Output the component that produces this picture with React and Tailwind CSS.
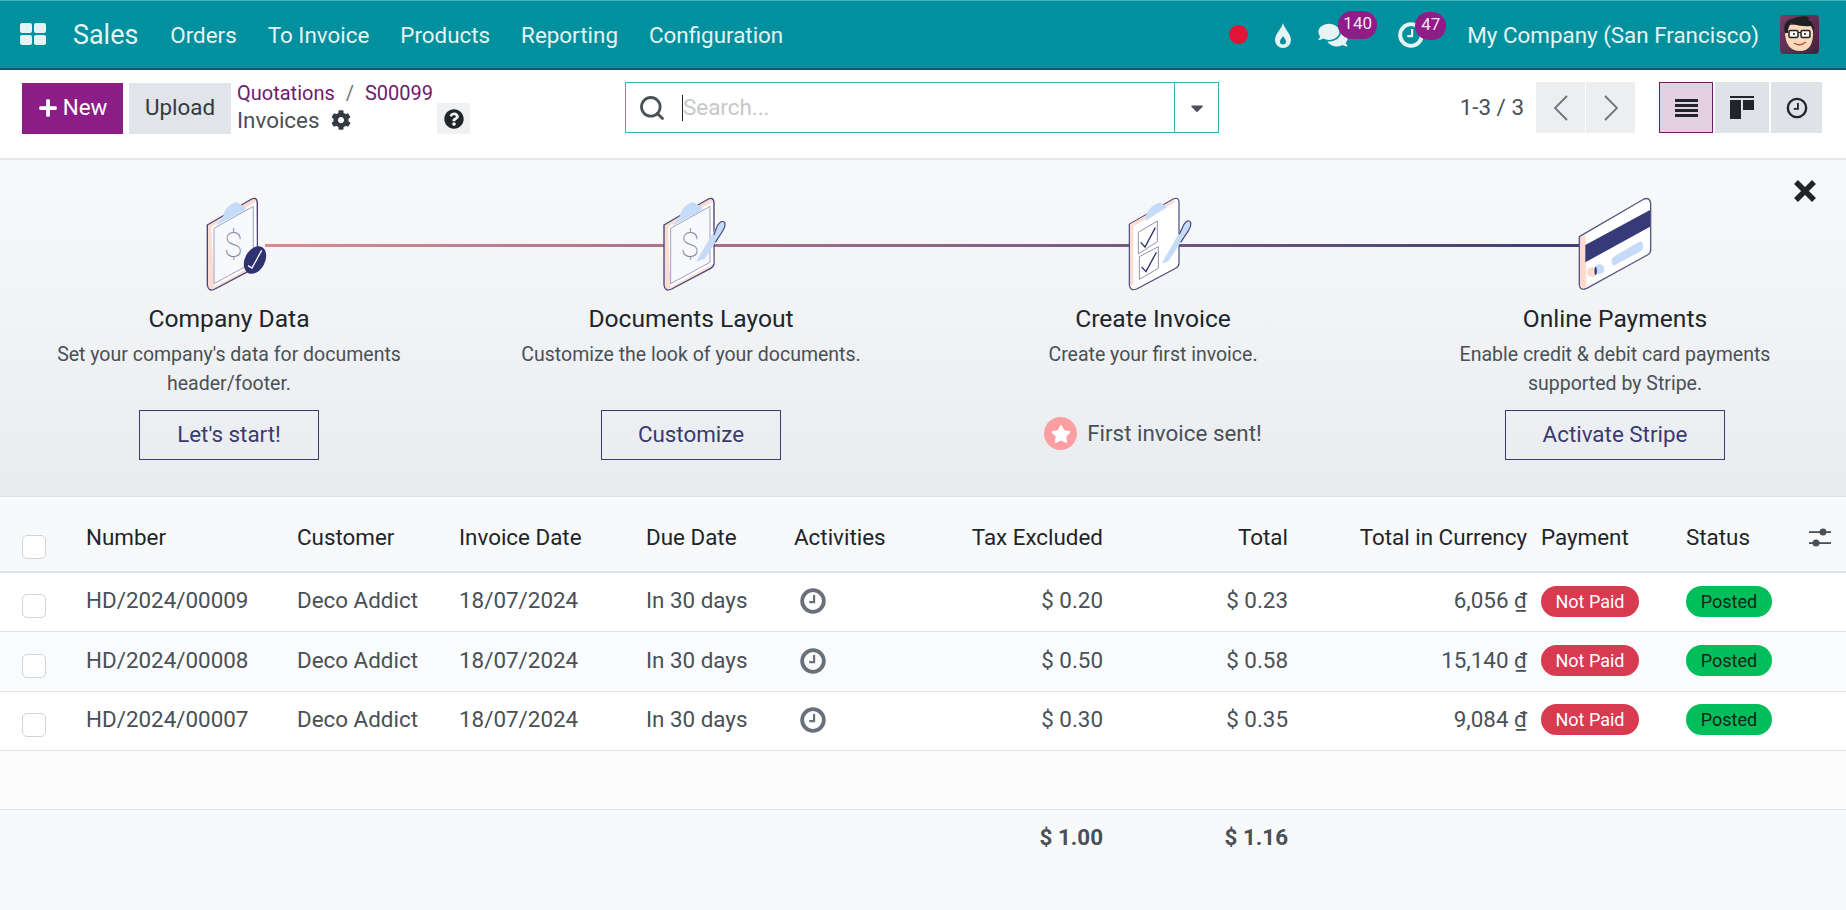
import React from "react";
import { FaComments, FaCog, FaQuestionCircle, FaPlus, FaCaretDown, FaStar } from "react-icons/fa";
import { Search } from "lucide-react";

const Clock = ({ className, sw = 3 }) => (
  <svg viewBox="0 0 24 24" className={className} fill="none" stroke="currentColor">
    <circle cx="12" cy="12" r="10" strokeWidth={sw} />
    <path d="M13 6.5v6.5H8.5" strokeWidth="2" />
  </svg>
);

const NAVY = "#46467c";

const Board = ({ dx = 0 }) => (
  <g transform={`translate(${dx} 0)`}>
    <path d="M72 120 L205 42 Q220 35 222 52 L222 235 Q222 245 212 250 L95 312 Q75 322 72 300 Z" fill="#fbdcd2" stroke={NAVY} strokeWidth="4" />
    <path d="M84 126 L218 50 L220 236 L92 306 Z" fill="#ffffff" />
    <path d="M92 130 L210 64 L210 232 L92 296 Z" fill="#f8f9fd" stroke="#8b8db0" strokeWidth="2.5" />
    <path d="M98 122 L120 92 Q122 72 145 56 Q160 46 170 58 L186 66 L186 76 Z" fill="#c5dbf7" />
    <text x="150" y="216" fontSize="104" fontWeight="100" fill="#85879f" textAnchor="middle" fontFamily="Roboto, sans-serif">$</text>
  </g>
);

const Pen = ({ dx = 0, dy = 0 }) => (
  <g transform={`translate(${dx} ${dy})`}>
    <path d="M168 230 L232 122 Q244 104 254 112 Q258 122 248 138 L194 222 Z" fill="#c5dbf7" />
    <path d="M222 150 L232 122 Q244 104 254 112 Q258 122 248 138 L226 172" fill="none" stroke={NAVY} strokeWidth="3.5" />
  </g>
);

const Icon1 = () => (
  <svg viewBox="-33 0 360 345" className="w-[120px] h-[115px]">
    <Board dx={10} />
    <ellipse cx="225" cy="225" rx="30" ry="44" transform="rotate(28 225 225)" fill="#2f3270" />
    <path d="M204 242 L216 249 L245 196" fill="none" stroke="#fff" strokeWidth="4" />
  </svg>
);
const Icon2 = () => (
  <svg viewBox="-27 0 360 345" className="w-[120px] h-[115px]">
    <Board />
    <Pen />
  </svg>
);
const Icon3 = () => (
  <svg viewBox="-51 0 360 345" className="w-[120px] h-[115px]">
    <path d="M58 118 L190 42 Q205 35 207 50 L207 235 Q207 245 197 250 L80 312 Q60 320 58 300 Z" fill="#ffffff" stroke={NAVY} strokeWidth="3.5" />
    <path d="M60 118 L190 44 L196 50 L70 124 L70 300 L60 302 Z" fill="#fbdcd2" />
    <path d="M106 108 L110 84 Q125 60 150 52 L172 66 Z" fill="#c5dbf7" />
    <path d="M85 142 L142 108 L142 170 L85 207 Z M88 215 L145 185 L145 250 L88 283 Z" fill="none" stroke="#7c7c9c" strokeWidth="2.5" />
    <path d="M92 172 L105 186 L136 128 M95 246 L108 260 L139 202" fill="none" stroke="#2f3270" strokeWidth="4" />
    <path d="M155 236 L222 118 Q234 100 242 112 Q244 122 236 136 L176 228 Z" fill="#c5dbf7" />
    <path d="M208 148 L222 118 Q234 100 242 112 Q244 122 236 136 L212 172" fill="none" stroke={NAVY} strokeWidth="3.5" />
  </svg>
);
const Icon4 = () => (
  <svg viewBox="-45 0 360 345" className="w-[120px] h-[115px]">
    <path d="M28 155 L222 42 Q240 36 242 55 L242 195 Q242 205 232 210 L50 310 Q30 318 28 300 Z" fill="#ffffff" stroke="#55557f" strokeWidth="4" />
    <path d="M30 156 L46 150 L50 306 Q32 314 30 298 Z" fill="#fcdacd" />
    <path d="M46 180 L240 75 L240 125 L46 232 Z" fill="#363a78" />
    <path d="M135 213 L205 172 Q218 166 219 180 L219 188 Q219 195 210 200 L135 240 Q125 244 125 232 L125 226 Q125 218 135 213 Z" fill="#c5dbf7" />
    <circle cx="66" cy="262" r="15" fill="#fcdacd" />
    <circle cx="88" cy="253" r="15" fill="#c5dbf7" />
    <ellipse cx="77" cy="258" rx="3.5" ry="12" fill="#2f3270" />
  </svg>
);

const Avatar = () => (
  <svg viewBox="0 0 39 39" className="w-[39px] h-[39px] rounded-[4px]">
    <defs>
      <linearGradient id="av" x1="0" y1="0" x2="1" y2="1">
        <stop offset="0" stopColor="#7b3d66" />
        <stop offset="1" stopColor="#43213f" />
      </linearGradient>
    </defs>
    <rect width="39" height="39" fill="url(#av)" />
    <path d="M5 16 Q5 36 20 36 Q34 36 33 15 L31 9 L9 10 Z" fill="#fbd7bb" />
    <path d="M5 18 Q2 6 12 4 Q20 0 29 2 L28 5 Q35 7 34 18 L31 11 Q20 12 11 8 Q8 12 8 18 Z" fill="#1e2024" />
    <rect x="9" y="15.5" width="9" height="7" rx="1.5" fill="#fdf6ee" stroke="#23242a" strokeWidth="1.5" />
    <rect x="21" y="15.5" width="9" height="7" rx="1.5" fill="#fdf6ee" stroke="#23242a" strokeWidth="1.5" />
    <path d="M18 17.5h3" stroke="#23242a" strokeWidth="1.2" />
    <circle cx="14" cy="19" r="1" fill="#222" />
    <circle cx="25" cy="19" r="1" fill="#222" />
    <path d="M14 28 Q20 32 26 27" fill="none" stroke="#a5543f" strokeWidth="1.3" />
  </svg>
);

const Checkbox = ({ className }) => (
  <span className={"block w-6 h-6 rounded-[5px] border border-[#ced4da] bg-white " + className} />
);

const GRID = "grid grid-cols-[86px_211px_162px_187px_148px_130px_179px_185px_239px_14px_145px_1fr] items-center";

const steps = [
  { icon: <Icon1 />, title: "Company Data", desc: "Set your company's data for documents header/footer.", btn: "Let's start!", w: "w-[180px]" },
  { icon: <Icon2 />, title: "Documents Layout", desc: "Customize the look of your documents.", btn: "Customize", w: "w-[180px]" },
  { icon: <Icon3 />, title: "Create Invoice", desc: "Create your first invoice.", done: "First invoice sent!" },
  { icon: <Icon4 />, title: "Online Payments", desc: "Enable credit & debit card payments supported by Stripe.", btn: "Activate Stripe", w: "w-[220px]" },
];

const rows = [
  { n: "HD/2024/00009", tax: "$ 0.20", total: "$ 0.23", cur: "6,056 ₫", bg: "bg-white" },
  { n: "HD/2024/00008", tax: "$ 0.50", total: "$ 0.58", cur: "15,140 ₫", bg: "bg-[#fafbfc]" },
  { n: "HD/2024/00007", tax: "$ 0.30", total: "$ 0.35", cur: "9,084 ₫", bg: "bg-white" },
];

export default function App() {
  return (
    <div className="w-[1846px] h-[910px] overflow-hidden bg-white [font-family:Roboto,sans-serif] text-[22.4px] text-[#495057]">
      {/* Navbar */}
      <header className="h-[70px] bg-[#00909e] border-t border-t-[#45b3bd] border-b-2 border-b-[#00626c] flex items-center text-[#e6f4f5]">
        <svg viewBox="0 0 26 22" className="ml-[20px] w-[26px] h-[22px] mb-[2px]" fill="#e4f3f4">
          <rect x="0" y="0" width="12" height="10" rx="2" />
          <rect x="14" y="0" width="12" height="10" rx="2" />
          <rect x="0" y="12" width="12" height="10" rx="2" />
          <rect x="14" y="12" width="12" height="10" rx="2" />
        </svg>
        <span className="ml-[27px] mt-[2px] text-[26.9px]">Sales</span>
        <nav className="ml-[32px] mt-[2px] flex gap-[31px]">
          <span>Orders</span>
          <span>To Invoice</span>
          <span>Products</span>
          <span>Reporting</span>
          <span>Configuration</span>
        </nav>
        <div className="ml-auto flex items-center">
          <span className="w-[19px] h-[19px] rounded-full bg-[#e01538]" />
          <svg viewBox="0 0 20 26" className="ml-[25px] w-[20px] h-[26px]">
            <path d="M10 1 C11 6 18 12 18 18 A8 8 0 0 1 2 18 C2 12 9 6 10 1 Z" fill="#e6f4f5" />
            <path d="M10 14 C11 16 13 17.500 13 19.500 A3 3 0 0 1 7 19.500 C7 17.500 9 16 10 14 Z" fill="#00909e" />
          </svg>
          <span className="relative ml-[25px] w-[30px] h-[26px]">
            <FaComments className="w-[30px] h-[26px]" />
            <span className="absolute left-[20px] top-[-11px] w-[39px] h-[28px] rounded-[14px] bg-[#8f1c87] text-[17px] leading-[24px] text-center text-[#f3e4f2]">140</span>
          </span>
          <span className="relative ml-[50px] w-[26px] h-[26px]">
            <Clock className="w-[26px] h-[26px]" sw={3.6} />
            <span className="absolute left-[17px] top-[-10px] w-[31px] h-[28px] rounded-[14px] bg-[#8f1c87] text-[17px] leading-[24px] text-center text-[#f3e4f2]">47</span>
          </span>
          <span className="ml-[43px] mt-[2px]">My Company (San Francisco)</span>
          <span className="ml-[21px] mr-[27px]"><Avatar /></span>
        </div>
      </header>

      {/* Control panel */}
      <section className="h-[90px] border-b-2 border-b-[#e4e6ea] flex items-start bg-white">
        <div className="w-[625px] shrink-0 flex items-start pt-[13px] pl-[22px]">
          <button className="w-[101px] h-[51px] pb-[2px] bg-[#8c1c86] text-white flex items-center justify-center gap-[5px]">
            <FaPlus className="w-[20px] h-[20px]" />New
          </button>
          <button className="ml-[6px] w-[102px] h-[51px] pb-[2px] bg-[#e1e4e8] text-[#343a40]">Upload</button>
          <div className="ml-[6px] mt-[-4px] w-[200px] leading-[28px] whitespace-nowrap">
            <div className="text-[#71196d] text-[20px]">
              Quotations <span className="text-[#6c757d] mx-[6px]">/</span> S00099
            </div>
            <div className="flex items-center mt-[-1px]">
              Invoices <FaCog className="ml-[11px] w-[20px] h-[20px] text-[#343a40]" />
            </div>
          </div>
          <button className="w-[33px] h-[31px] mt-[20px] bg-[#eff1f3] flex items-center justify-center">
            <FaQuestionCircle className="w-[20px] h-[20px] text-[#212529]" />
          </button>
        </div>
        <div className="mt-[12px] w-[594px] h-[51px] border border-[#3ab0bc] flex items-center">
          <Search className="ml-[12px] w-[28px] h-[28px] text-[#495057]" strokeWidth={2.4} />
          <span className="ml-[16px] w-px h-[26px] bg-[#212529]" />
          <span className="text-[#c5c8cc]">Search...</span>
          <span className="ml-auto w-[44px] h-full border-l border-[#3ab0bc] flex items-center justify-center">
            <FaCaretDown className="w-[20px] h-[20px] text-[#495057]" />
          </span>
        </div>
        <div className="flex-1 flex items-start justify-end mt-[12px] pr-[24px]">
          <span className="h-[51px] leading-[51px]">1-3 / 3</span>
          <div className="ml-[12px] flex gap-px">
            <span className="w-[49px] h-[51px] bg-[#eceef0] flex items-center justify-center">
              <svg viewBox="0 0 14 26" className="w-[14px] h-[26px]" fill="none" stroke="#6c757d" strokeWidth="1.8"><path d="M13 1 1 13l12 12" /></svg>
            </span>
            <span className="w-[49px] h-[51px] bg-[#eceef0] flex items-center justify-center">
              <svg viewBox="0 0 14 26" className="w-[14px] h-[26px]" fill="none" stroke="#6c757d" strokeWidth="1.8"><path d="M1 1l12 12L1 25" /></svg>
            </span>
          </div>
          <div className="ml-[24px] flex gap-[2px]">
            <span className="w-[54px] h-[51px] bg-[#e3d0e3] border border-[#71196d] flex items-center justify-center">
              <svg viewBox="0 0 23 18" className="w-[23px] h-[18px]" fill="#212529">
                <rect y="0" width="23" height="3" /><rect y="5" width="23" height="3" /><rect y="10" width="23" height="3" /><rect y="15" width="23" height="3" />
              </svg>
            </span>
            <span className="w-[54px] h-[51px] bg-[#dfe2e6] flex items-center justify-center">
              <svg viewBox="0 0 24 23" className="w-[24px] h-[23px]" fill="#212529">
                <rect y="0" width="24" height="2" /><rect y="4" width="11" height="19" /><rect x="13" y="4" width="11" height="10" />
              </svg>
            </span>
            <span className="w-[51px] h-[51px] bg-[#dfe2e6] flex items-center justify-center">
              <Clock className="w-[22px] h-[22px] text-[#212529]" sw={2.6} />
            </span>
          </div>
        </div>
      </section>

      {/* Onboarding banner */}
      <section className="relative h-[337px] bg-gradient-to-b from-[#f8f9fa] to-[#e9ecef] border-b border-b-[#dee2e6] overflow-hidden">
        <div className="absolute left-[265px] top-[84px] w-[1315px] h-[3px] bg-gradient-to-r from-[#d98a94] via-[#8f6683] to-[#3f3d72]" />
        <svg viewBox="0 0 24 24" className="absolute left-[1793px] top-[19px] w-[24px] h-[24px]" fill="none" stroke="#212529" strokeWidth="5.5">
          <path d="M3 3 21 21M21 3 3 21" />
        </svg>
        <div className="relative ml-[-2px] w-[1848px] grid grid-cols-4 pt-[25px]">
          {steps.map((s) => (
            <div key={s.title} className="flex flex-col items-center">
              {s.icon}
              <div className="mt-[4px] text-[24.6px] leading-[30px] text-[#212529]">{s.title}</div>
              <div className="mt-[6px] h-[58px] max-w-[360px] text-center text-[19.5px] leading-[29px] text-[#495057]">{s.desc}</div>
              <div className="mt-[12px] h-[50px] flex items-center">
                {s.btn ? (
                  <button className={"h-[50px] border border-[#3b3a70] text-[#3b3a70] " + s.w}>{s.btn}</button>
                ) : (
                  <div className="flex items-center gap-[10px] mb-[2px]">
                    <span className="w-[33px] h-[33px] rounded-full bg-[#fd9ea2] flex items-center justify-center">
                      <FaStar className="w-[20px] h-[20px] text-white" />
                    </span>
                    {s.done}
                  </div>
                )}
              </div>
            </div>
          ))}
        </div>
      </section>

      {/* Table */}
      <div className={GRID + " h-[76px] bg-[#f8f9fa] border-b-2 border-b-[#dee2e6] text-[#212529]"}>
        <Checkbox className="ml-[22px] mt-[26px]" />
        <span className="mt-[8px]">Number</span>
        <span className="mt-[8px]">Customer</span>
        <span className="mt-[8px]">Invoice Date</span>
        <span className="mt-[8px]">Due Date</span>
        <span className="mt-[8px]">Activities</span>
        <span className="mt-[8px] text-right">Tax Excluded</span>
        <span className="mt-[8px] text-right">Total</span>
        <span className="mt-[8px] text-right whitespace-nowrap">Total in Currency</span>
        <span />
        <span className="mt-[8px]">Payment</span>
        <div className="mt-[8px] flex items-center justify-between pr-[15px]">
          <span>Status</span>
          <svg viewBox="0 0 22 19" className="w-[22px] h-[19px]" fill="#495057">
            <rect y="3.2" width="22" height="1.8" /><circle cx="14" cy="4" r="3.5" />
            <rect y="14.2" width="22" height="1.8" /><circle cx="7" cy="15" r="3.5" />
          </svg>
        </div>
      </div>
      {rows.map((r) => (
        <div key={r.n} className={GRID + " h-[59.4px] border-b border-b-[#dee2e6] " + r.bg}>
          <Checkbox className="ml-[22px] mt-[8px]" />
          <span className="mb-[2px]">{r.n}</span>
          <span className="mb-[2px]">Deco Addict</span>
          <span className="mb-[2px]">18/07/2024</span>
          <span className="mb-[2px]">In 30 days</span>
          <span className="mb-[2px] pl-[6px] text-[#68707a]"><Clock className="w-[26px] h-[26px] block" sw={3.5} /></span>
          <span className="mb-[2px] text-right">{r.tax}</span>
          <span className="mb-[2px] text-right">{r.total}</span>
          <span className="mb-[2px] text-right whitespace-nowrap">{r.cur}</span>
          <span />
          <span className="mb-[2px] w-[98px] h-[31px] rounded-full bg-[#d83a50] text-white text-[18px] leading-[31px] text-center">Not Paid</span>
          <span className="mb-[2px] w-[86px] h-[31px] rounded-full bg-[#00bf5a] text-[#16241c] text-[18px] leading-[31px] text-center">Posted</span>
        </div>
      ))}
      <div className="h-[59px] bg-[#fcfcfd] border-b border-b-[#dee2e6]" />
      <div className={GRID + " h-[100px] bg-[#f8f9fa] font-bold pb-[44px]"}>
        <span /><span /><span /><span /><span /><span />
        <span className="text-right">$ 1.00</span>
        <span className="text-right">$ 1.16</span>
      </div>
    </div>
  );
}
